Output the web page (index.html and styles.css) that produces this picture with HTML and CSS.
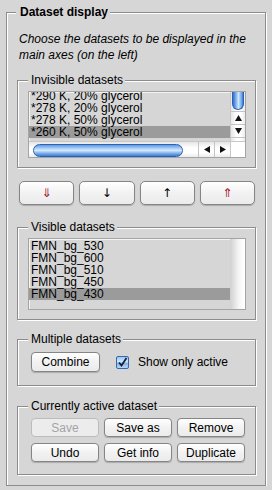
FILE: index.html
```html
<!DOCTYPE html>
<html>
<head>
    <title>Dataset display</title>
    <link rel="stylesheet" href="styles.css">
</head>
<body>
    <fieldset class="panel">
        <legend class="panel-title">Dataset display</legend>
        <p class="hint">Choose the datasets to be displayed in the main axes (on the left)</p>

        <fieldset class="group group-invisible">
            <legend>Invisible datasets</legend>
            <div class="list list-scroll">
                <div class="list-rows">
                    <div class="rows-inner">
                        <div class="row">*290 K, 20% glycerol</div>
                        <div class="row">*278 K, 20% glycerol</div>
                        <div class="row">*278 K, 50% glycerol</div>
                        <div class="row selected">*260 K, 50% glycerol</div>
                    </div>
                </div>
                <div class="vscroll">
                    <div class="vthumb"></div>
                    <div class="vbtns">
                        <div class="vbtn"><svg width="7" height="6" viewBox="0 0 7 6"><polygon points="3.5,0 7,6 0,6" fill="#111"/></svg></div>
                        <div class="vbtn"><svg width="7" height="6" viewBox="0 0 7 6"><polygon points="0,0 7,0 3.5,6" fill="#111"/></svg></div>
                    </div>
                </div>
                <div class="hscroll">
                    <div class="htrack"><div class="hthumb"></div></div>
                    <div class="hbtn"><svg width="6" height="7" viewBox="0 0 6 7"><polygon points="6,0 6,7 0,3.5" fill="#111"/></svg></div>
                    <div class="hbtn"><svg width="6" height="7" viewBox="0 0 6 7"><polygon points="0,0 6,3.5 0,7" fill="#111"/></svg></div>
                </div>
                <div class="corner"></div>
            </div>
        </fieldset>

        <div class="move-row">
            <button class="btn move move-bottom">&#8659;</button>
            <button class="btn move">&#8595;</button>
            <button class="btn move">&#8593;</button>
            <button class="btn move move-top">&#8657;</button>
        </div>

        <fieldset class="group group-visible">
            <legend>Visible datasets</legend>
            <div class="list list-plain">
                <div class="list-rows">
                    <div class="row">FMN_bg_530</div>
                    <div class="row">FMN_bg_600</div>
                    <div class="row">FMN_bg_510</div>
                    <div class="row">FMN_bg_450</div>
                    <div class="row selected">FMN_bg_430</div>
                </div>
                <div class="track"></div>
            </div>
        </fieldset>

        <fieldset class="group group-multi">
            <legend>Multiple datasets</legend>
            <div class="multi-row">
                <button class="btn small">Combine</button>
                <label class="check">
                    <span class="box"><svg width="11" height="11" viewBox="0 0 11 11"><path d="M2 5.5 L4.5 8.5 L9.5 1" fill="none" stroke="#14213d" stroke-width="1.8"/></svg></span>
                    Show only active
                </label>
            </div>
        </fieldset>

        <fieldset class="group group-active">
            <legend>Currently active dataset</legend>
            <div class="action-grid">
                <button class="btn small" disabled>Save</button>
                <button class="btn small">Save as</button>
                <button class="btn small">Remove</button>
                <button class="btn small">Undo</button>
                <button class="btn small">Get info</button>
                <button class="btn small">Duplicate</button>
            </div>
        </fieldset>
    </fieldset>
</body>
</html>
```
FILE: styles.css
```css
body {
    margin: 0;
    padding: 5px 0 0 6px;
    background-color: #d6d6d6;
    font-family: "Liberation Sans", Arial, sans-serif;
    font-size: 12px;
    color: #000;
}

fieldset {
    box-sizing: border-box;
    min-width: 0;
    margin: 0;
    border: 1px solid #8c8c8c;
    box-shadow: inset 1px 1px 0 #fff, 1px 1px 0 #fff;
}

legend {
    line-height: 14px;
    background-color: #d6d6d6;
}

.panel {
    width: 260px;
    padding: 0 9px 10px 10px;
}

.panel-title {
    font-weight: bold;
    margin-left: -1px;
    padding: 0 2px 0 4px;
}

.hint {
    margin: 12px 0 10px 2px;
    font-style: italic;
    line-height: 16px;
}

.group {
    padding: 0 9px 9px 10px;
}

.group legend {
    padding: 0 2px 0 3px;
}

/* list boxes */
.list {
    margin-top: 4px;
    border: 1px solid #a4a4a4;
    background-color: #d6d6d6;
    box-shadow: inset 1px 1px 0 #f4f4f4;
}

.row {
    height: 12px;
    line-height: 12px;
    padding-left: 2px;
    white-space: nowrap;
}

.row.selected {
    background-color: #9b9b9b;
}

.list-scroll {
    height: 65px;
    display: grid;
    grid-template-columns: 1fr 15px;
    grid-template-rows: 1fr 16px;
}

.list-scroll .list-rows {
    overflow: hidden;
}

.rows-inner {
    margin-top: -2px;
}

.vscroll {
    display: flex;
    flex-direction: column;
    background: linear-gradient(to right, #e6e6e6, #fff 40%, #fff 70%, #ececec);
    border-left: 1px solid #c8c8c8;
}

.vthumb {
    height: 17px;
    margin: 0 1px;
    border: 1px solid #2c62b5;
    border-top: none;
    border-radius: 0 0 7px 7px;
    background: linear-gradient(to right, #2f6fd0, #8ebcf2 35%, #d2e6fb 55%, #6ea6e8 85%, #3b78d4);
}

.vbtns {
    margin-top: 1px;
    border-top: 1px solid #c4c4c4;
}

.vbtn {
    height: 12px;
    display: flex;
    align-items: center;
    justify-content: center;
    border-bottom: 1px solid #c4c4c4;
}

.hscroll {
    display: flex;
    border-top: 1px solid #c8c8c8;
    background: linear-gradient(#e6e6e6, #fff 40%, #fff 70%, #ececec);
}

.htrack {
    flex: 1;
    padding: 2px 8px 1px 4px;
}

.hthumb {
    width: 148px;
    height: 11px;
    border: 1px solid #2c62b5;
    border-radius: 7px;
    background: linear-gradient(#5f98e2, #a9cef6 30%, #d5e8fb 50%, #7db0ec 75%, #3f7bd3);
}

.hbtn {
    width: 15px;
    display: flex;
    align-items: center;
    justify-content: center;
    border-left: 1px solid #c4c4c4;
}

.corner {
    background-color: #fff;
    border-top: 1px solid #c8c8c8;
    border-left: 1px solid #c8c8c8;
}

.list-plain {
    height: 70px;
    display: flex;
}

.list-plain .list-rows {
    flex: 1;
    padding-top: 1px;
}

.track {
    width: 15px;
    background: linear-gradient(to right, #d0d0d0, #f6f6f6 60%, #fff);
}

/* buttons */
.btn {
    font-family: "Liberation Sans", Arial, sans-serif;
    font-size: 12px;
    color: #000;
    border: 1px solid #858585;
    border-radius: 4px;
    background: linear-gradient(#ffffff, #f2f2f2 50%, #ebebeb);
    box-shadow: 0 1px 1px rgba(0, 0, 0, 0.2);
    padding: 0;
}

.btn:disabled {
    color: #a4a4a4;
    border-color: #bcbcbc;
    background: #ececec;
    box-shadow: none;
}

.move-row {
    display: grid;
    grid-template-columns: repeat(4, 1fr);
    gap: 5px;
    margin: 13px 0 15px;
    padding: 0 1px 0 2px;
}

.move {
    height: 24px;
    border-radius: 5px;
    font-family: "DejaVu Sans", sans-serif;
    font-size: 12px;
    line-height: 1;
}

.move-bottom,
.move-top {
    color: #9a1030;
}

.group-visible,
.group-multi,
.group-active {
    margin-top: 12px;
}

.group-active {
    margin-top: 13px;
    padding-bottom: 12px;
}

.small {
    height: 19px;
}

.multi-row {
    display: flex;
    align-items: center;
    margin: 6px 0 4px 3px;
}

.multi-row .small {
    width: 69px;
    height: 20px;
}

.check {
    display: flex;
    align-items: center;
    margin-left: 16px;
}

.box {
    width: 13px;
    height: 13px;
    box-sizing: border-box;
    margin-right: 9px;
    border: 1px solid #3a67a8;
    border-radius: 2px;
    background: linear-gradient(#9cc6f2, #d6e9fc 45%, #7fb1ea 55%, #b8d8f8);
    display: flex;
    align-items: center;
    justify-content: center;
}

.action-grid {
    display: grid;
    grid-template-columns: repeat(3, 68px);
    gap: 6px 5px;
    margin: 5px 0 0 3px;
}
```
